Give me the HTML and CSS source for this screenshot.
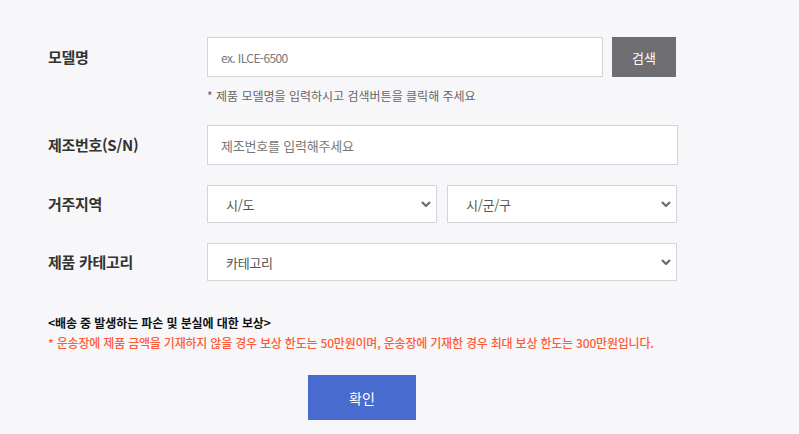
FILE: index.html
```html
<!DOCTYPE html>
<html lang="ko">
<head>
<meta charset="utf-8">
<link rel="stylesheet" href="styles.css">
</head>
<body>
<div class="form">
  <div class="row row-model">
    <div class="label">모델명</div>
    <div class="field">
      <div class="inline">
        <div class="input input-model"><span class="ph ph-latin">ex. ILCE-6500</span></div>
        <button class="btn-search">검색</button>
      </div>
      <p class="hint">* 제품 모델명을 입력하시고 검색버튼을 클릭해 주세요</p>
    </div>
  </div>
  <div class="row row-serial">
    <div class="label">제조번호(S/N)</div>
    <div class="field">
      <div class="input input-wide"><span class="ph">제조번호를 입력해주세요</span></div>
    </div>
  </div>
  <div class="row row-addr">
    <div class="label">거주지역</div>
    <div class="field">
      <div class="inline sel-pair">
        <div class="select"><span class="sel-text">시/도</span><svg class="chev" viewBox="0 0 10 6"><path d="M1 1 L5 5 L9 1" fill="none" stroke="#6b6b6b" stroke-width="2.2"/></svg></div>
        <div class="select"><span class="sel-text">시/군/구</span><svg class="chev" viewBox="0 0 10 6"><path d="M1 1 L5 5 L9 1" fill="none" stroke="#6b6b6b" stroke-width="2.2"/></svg></div>
      </div>
    </div>
  </div>
  <div class="row row-cat">
    <div class="label">제품 카테고리</div>
    <div class="field">
      <div class="select select-wide"><span class="sel-text">카테고리</span><svg class="chev" viewBox="0 0 10 6"><path d="M1 1 L5 5 L9 1" fill="none" stroke="#6b6b6b" stroke-width="2.2"/></svg></div>
    </div>
  </div>
  <div class="notice">
    <p class="notice-title">&lt;배송 중 발생하는 파손 및 분실에 대한 보상&gt;</p>
    <p class="notice-red">* 운송장에 제품 금액을 기재하지 않을 경우 보상 한도는 50만원이며, 운송장에 기재한 경우 최대 보상 한도는 300만원입니다.</p>
  </div>
  <div class="actions">
    <button class="btn-confirm">확인</button>
  </div>
</div>
</body>
</html>
```

FILE: styles.css
```css
* { box-sizing: border-box; }
html, body { margin: 0; padding: 0; }
body {
  background: #f7f7f9;
  font-family: "Noto Sans CJK KR", "Noto Sans", sans-serif;
  color: #333;
  width: 799px;
  height: 434px;
  overflow: hidden;
}
.form {
  padding: 37px 0 0 48px;
}
.row {
  display: flex;
  align-items: flex-start;
}
.label {
  width: 159px;
  flex: none;
  font-size: 15px;
  font-weight: 700;
  color: #333;
  height: 40px;
  line-height: 40px;
  letter-spacing: -0.3px;
}
.row-addr .label, .row-cat .label { height: 38px; line-height: 38px; }
.inline { display: flex; gap: 9px; }
.input {
  height: 40px;
  background: #fff;
  border: 1px solid #d3d3d9;
  padding: 0 13px;
  display: flex;
  align-items: center;
}
.input-model { width: 396px; }
.input-wide { width: 471px; }
.ph { font-size: 13px; color: #777; letter-spacing: -0.2px; }
.ph-latin { font-size: 12px; letter-spacing: -0.6px; }
.btn-search {
  width: 64px;
  height: 40px;
  border: 0;
  background: #6e6d72;
  color: #fff;
  font-family: inherit;
  font-size: 13px;
  padding: 0;
}
.hint {
  margin: 8px 0 0;
  font-size: 12px;
  line-height: 22px;
  color: #666;
  letter-spacing: 0;
}
.row-serial { margin-top: 18px; }
.row-addr { margin-top: 20px; }
.row-cat { margin-top: 20px; }
.sel-pair { gap: 10px; }
.select {
  width: 230px;
  height: 38px;
  background: #fff;
  border: 1px solid #d3d3d9;
  padding: 0 5px 0 18px;
  display: flex;
  align-items: center;
  justify-content: space-between;
}
.select-wide { width: 470px; }
.sel-text { font-size: 13px; color: #555; letter-spacing: -0.3px; }
.chev { width: 10px; height: 6px; }
.notice { margin-top: 32px; }
.notice p { margin: 0; }
.notice-title { font-size: 12px; font-weight: 700; color: #111; line-height: 20px; letter-spacing: -0.1px; }
.notice-red { font-size: 12px; font-weight: 500; color: #ff5b37; line-height: 20px; letter-spacing: -0.2px; }
.actions { padding-left: 260px; margin-top: 22px; }
.btn-confirm {
  width: 108px;
  height: 45px;
  border: 0;
  background: #476bce;
  color: #fff;
  font-family: inherit;
  font-size: 14px;
  padding: 0;
}
```
